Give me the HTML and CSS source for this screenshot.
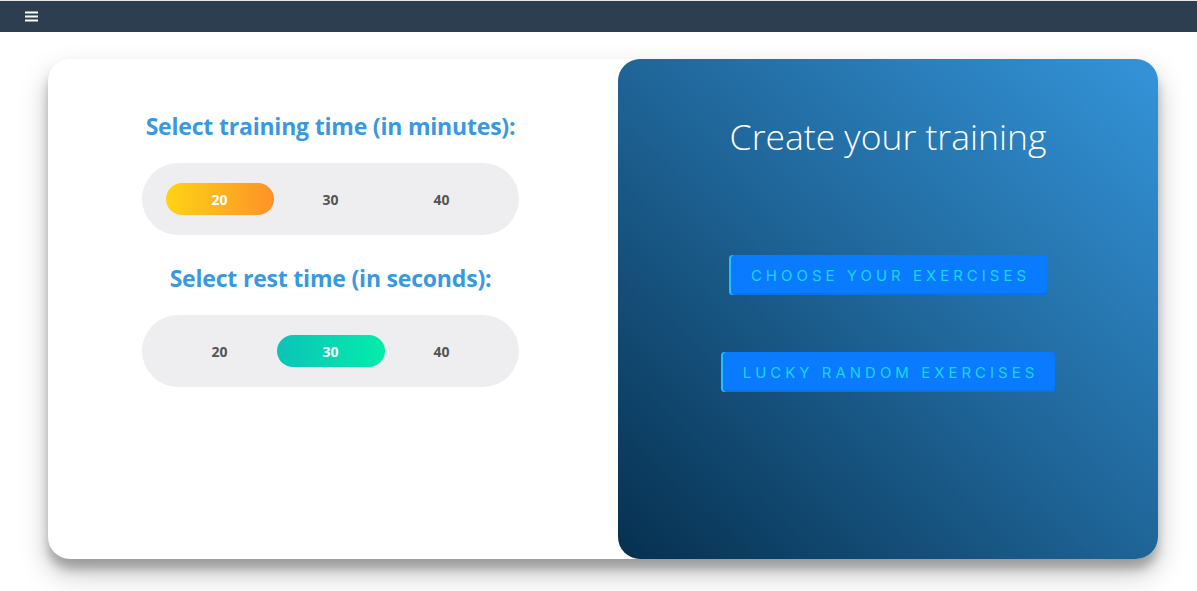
FILE: index.html
```html
<!DOCTYPE html>
<html lang="en">
<head>
<meta charset="utf-8">
<title>Create your training</title>
<link rel="stylesheet" href="styles.css">
</head>
<body>
<nav class="navbar">
  <button class="menu-btn" aria-label="Menu">
    <svg width="13" height="11" viewBox="0 0 13 11"><rect x="0" y="0.5" width="13" height="2" fill="#fff"/><rect x="0" y="4.5" width="13" height="2" fill="#fff"/><rect x="0" y="8.5" width="13" height="2" fill="#fff"/></svg>
  </button>
</nav>
<main class="page">
  <section class="card">
    <div class="card-left">
      <h2 class="select-title">Select training time (in minutes):</h2>
      <div class="switch">
        <span class="opt"><span class="opt-btn active-warm">20</span></span>
        <span class="opt"><span class="opt-btn">30</span></span>
        <span class="opt"><span class="opt-btn">40</span></span>
      </div>
      <h2 class="select-title second">Select rest time (in seconds):</h2>
      <div class="switch">
        <span class="opt"><span class="opt-btn">20</span></span>
        <span class="opt"><span class="opt-btn active-cool">30</span></span>
        <span class="opt"><span class="opt-btn">40</span></span>
      </div>
    </div>
    <div class="card-right">
      <h1 class="create-title">Create your training</h1>
      <div class="actions">
        <button class="neon-btn">CHOOSE YOUR EXERCISES</button>
        <button class="neon-btn">LUCKY RANDOM EXERCISES</button>
      </div>
    </div>
  </section>
</main>
</body>
</html>
```
FILE: styles.css
```css
* { box-sizing: border-box; }
html, body { margin: 0; padding: 0; }
body {
  background: #fff;
  font-family: "Open Sans", "Noto Sans", sans-serif;
  border-top: 1px solid #e6e6e6;
}
.navbar {
  height: 31px;
  background: #2d3e50;
  display: flex;
  align-items: center;
  padding-left: 25px;
}
.menu-btn {
  border: 0;
  background: none;
  padding: 0;
  display: flex;
  align-items: center;
}
.page {
  padding: 27px 39px 32px 48px;
}
.card {
  width: 1110px;
  height: 500px;
  display: flex;
  background: #fff;
  border-radius: 22px;
  box-shadow: 0 14px 28px rgba(0,0,0,.25), 0 10px 10px rgba(0,0,0,.22);
}
.card-left {
  width: 570px;
  display: flex;
  flex-direction: column;
  align-items: center;
  padding-top: 52px;
  padding-right: 5px;
}
.select-title {
  margin: 0;
  font-size: 23px;
  font-weight: 700;
  color: #3a98df;
  line-height: 30px;
  letter-spacing: -0.2px;
}
.select-title.second { margin-top: 28px; }
.switch {
  margin-top: 22px;
  width: 377px;
  height: 72px;
  border-radius: 36px;
  background: #eeeef0;
  display: grid;
  grid-template-columns: repeat(3, 111px);
  padding: 0 22px;
  align-items: center;
}
.opt { display: flex; justify-content: center; }
.opt-btn {
  width: 108px;
  height: 32px;
  border-radius: 16px;
  display: flex;
  align-items: center;
  justify-content: center;
  font-size: 14px;
  font-weight: 700;
  color: #545454;
}
.active-warm {
  background: linear-gradient(to right, #fdd415, #fd9228);
  color: #fff;
}
.active-cool {
  background: linear-gradient(to right, #0cc3b8, #04ecab);
  color: #fff;
}
.card-right {
  flex: 1;
  border-radius: 22px;
  background: linear-gradient(to top right, #06304f 0%, #1f6598 50%, #3494d9 100%);
  display: flex;
  flex-direction: column;
  align-items: center;
  padding-top: 52px;
}
.create-title {
  margin: 0;
  font-family: "Open Sans", sans-serif;
  font-weight: 300;
  font-size: 35.5px;
  color: #fff;
  line-height: 50px;
}
.actions {
  margin-top: 94px;
  display: flex;
  flex-direction: column;
  align-items: center;
  gap: 57px;
}
.neon-btn {
  height: 40px;
  background: #0a7bff;
  border: 0;
  border-radius: 4px;
  box-shadow: inset 2px 0 0 #2bbcff, inset 0 -2px 0 #0a72ea;
  color: #1dd5ea;
  font-family: "Inter", sans-serif;
  font-size: 15px;
  font-weight: 400;
  letter-spacing: 4px;
  padding: 0 17px 0 22px;
}
```
